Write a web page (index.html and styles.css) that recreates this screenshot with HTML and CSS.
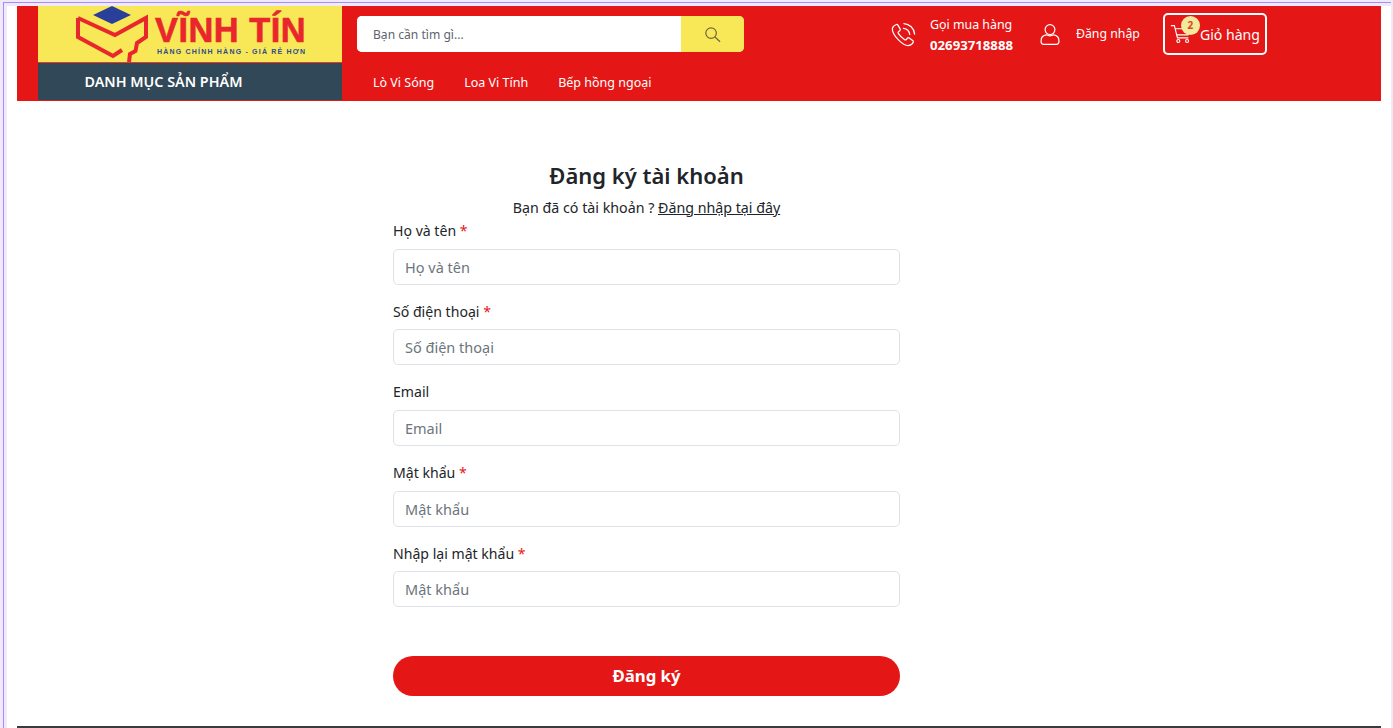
FILE: index.html
```html
<!DOCTYPE html>
<html lang="vi">
<head>
<meta charset="utf-8">
<title>Đăng ký tài khoản</title>
<link rel="stylesheet" href="styles.css">
</head>
<body>
<div class="window">
<div class="frame">
<div class="page">
  <header class="header">
    <div class="brand">
      <a class="logo" href="#">
        <svg class="logo-mark" viewBox="0 0 74 58" aria-hidden="true">
          <polygon class="logo-diamond" points="17,9 36,0 55,9 36,18"/>
          <polyline class="logo-stroke" points="2,12 39,29 70,12 70,31 61,37 59.5,45 54,48 53,56"/>
          <polyline class="logo-stroke" points="2,12 2,31 37,50 46,44"/>
        </svg>
        <span class="logo-text">
          <span class="logo-name">VĨNH TÍN</span>
          <span class="logo-tag">HÀNG CHÍNH HÀNG - GIÁ RẺ HƠN</span>
        </span>
      </a>
      <div class="catalog">DANH MỤC SẢN PHẨM</div>
    </div>
    <div class="bar">
      <div class="bar-top">
        <form class="search">
          <input class="search-input" type="text" placeholder="Bạn cần tìm gì...">
          <button class="search-btn" type="button" aria-label="Tìm kiếm">
            <svg viewBox="0 0 18 18" class="search-icon"><circle cx="7.5" cy="7.5" r="5.6"/><path d="M11.6 11.6 L17 16.6"/></svg>
          </button>
        </form>
        <div class="actions">
          <div class="hotline">
            <svg class="phone-icon" viewBox="0 0 26 26" aria-hidden="true">
              <path d="M5.6 2.6 C3.6 3.4 1.6 5 1.4 7 C1.2 10.2 4.6 15.4 8 18.8 C11.4 22.2 15.6 24.8 18.6 24.4 C20.6 24.1 22.6 22.4 23.2 20.8 C23.4 20.2 23.2 19.8 22.8 19.4 L19 16.6 C18.4 16.2 17.8 16.2 17.3 16.7 L15.7 18.4 C15.2 18.8 14.8 18.8 14.2 18.4 C11.8 16.8 9.2 14.2 7.6 11.8 C7.2 11.2 7.2 10.8 7.7 10.3 L9.3 8.8 C9.8 8.3 9.8 7.7 9.5 7.1 L7 3 C6.7 2.5 6.2 2.3 5.6 2.6 Z"/>
              <path d="M13 6.6 C16.4 7 19 9.6 19.5 13"/>
              <path d="M13.4 1.6 C19.4 2 24 6.6 24.6 12.6"/>
            </svg>
            <div class="hotline-text">
              <span class="hotline-label">Gọi mua hàng</span>
              <strong class="hotline-num">02693718888</strong>
            </div>
          </div>
          <a class="login" href="#">
            <svg class="user-icon" viewBox="0 0 22 24" aria-hidden="true">
              <circle cx="11" cy="6.6" r="5.4"/>
              <path d="M7 12.4 C3.4 13 1.2 15.4 1.2 18.6 V20 C1.2 21.6 2.4 22.8 4 22.8 H18 C19.6 22.8 20.8 21.6 20.8 20 V18.6 C20.8 15.4 18.6 13 15 12.4 C12.6 13.8 9.4 13.8 7 12.4 Z"/>
            </svg>
            <span>Đăng nhập</span>
          </a>
          <a class="cart" href="#">
            <svg class="cart-icon" viewBox="0 0 24 22" aria-hidden="true">
              <path d="M1 1.5 H5 L8.5 15.5 H21"/>
              <path d="M5.8 5 H22.6 L20.6 12 H7.5"/>
              <circle cx="9.5" cy="19" r="1.7"/>
              <circle cx="19.5" cy="19" r="1.7"/>
            </svg>
            <span>Giỏ hàng</span>
            <span class="cart-badge">2</span>
          </a>
        </div>
      </div>
      <nav class="nav">
        <a href="#">Lò Vi Sóng</a>
        <a href="#">Loa Vi Tính</a>
        <a href="#">Bếp hồng ngoại</a>
      </nav>
    </div>
  </header>
  <main class="main">
    <section class="register">
      <h1 class="title">Đăng ký tài khoản</h1>
      <p class="subtitle">Bạn đã có tài khoản ? <a href="#">Đăng nhập tại đây</a></p>
      <form class="form">
        <div class="field">
          <label>Họ và tên <span class="req">*</span></label>
          <input type="text" placeholder="Họ và tên">
        </div>
        <div class="field">
          <label>Số điện thoại <span class="req">*</span></label>
          <input type="text" placeholder="Số điện thoại">
        </div>
        <div class="field">
          <label>Email</label>
          <input type="text" placeholder="Email">
        </div>
        <div class="field">
          <label>Mật khẩu <span class="req">*</span></label>
          <input type="password" placeholder="Mật khẩu">
        </div>
        <div class="field">
          <label>Nhập lại mật khẩu <span class="req">*</span></label>
          <input type="password" placeholder="Mật khẩu">
        </div>
        <button class="submit" type="button">Đăng ký</button>
      </form>
    </section>
  </main>
  <footer class="footer"></footer>
</div>
</div>
</div>
</body>
</html>
```

FILE: styles.css
```css
* { box-sizing: border-box; }
html, body { margin: 0; height: 728px; overflow: hidden; }
body { background: #efe9fb; font-family: "Noto Sans", "Open Sans", sans-serif; color: #212529; }
a { color: inherit; text-decoration: none; }

.window { height: 728px; padding: 2px 2px 0 3px; }
.frame { height: 726px; border-top: 1px solid #a98bf5; border-left: 1px solid #a98bf5; padding: 3px 0 0 3px; }
.page { height: 722px; background: #fff; padding: 0 10px; display: flex; flex-direction: column; }

.header { height: 94.5px; background: #e51616; display: flex; padding-left: 21px; flex: none; }
.brand { width: 304px; flex: none; display: flex; flex-direction: column; }
.logo { height: 57px; background: #f8e858; border-bottom: 1px solid #ea3a20; display: flex; padding: 0 0 0 38px; gap: 5px; overflow: hidden; }
.logo-mark { width: 74px; height: 58px; flex: none; }
.logo-diamond { fill: #2a3f9a; }
.logo-stroke { fill: none; stroke: #e8262b; stroke-width: 4; }
.logo-text { display: flex; flex-direction: column; padding-top: 8px; width: 152px; }
.logo-name { font-family: "Liberation Sans", sans-serif; font-weight: 700; font-size: 34.4px; line-height: 33px; color: #e8262b; white-space: nowrap; letter-spacing: 0.5px; -webkit-text-stroke: 0.6px #e8262b; }
.logo-tag { font-family: "Liberation Sans", sans-serif; font-weight: 700; font-size: 7px; line-height: 9px; color: #2e4a90; letter-spacing: 1.2px; white-space: nowrap; margin-left: 2px; }
.catalog { height: 37px; background: #304858; color: #fff; font-size: 14.35px; font-weight: 600; line-height: 37px; padding-left: 46.5px; white-space: nowrap; }

.bar { flex: 1; padding-left: 15px; display: flex; flex-direction: column; }
.bar-top { height: 57px; display: flex; padding-top: 10px; }
.search { width: 387px; height: 36px; display: flex; border-radius: 5px; overflow: hidden; background: #fff; flex: none; }
.search-input { flex: 1; min-width: 0; border: 0; outline: 0; padding: 0 15px 0 16px; font: 12.1px "Noto Sans", sans-serif; background: #fff; }
.search-input::placeholder { color: #5d6670; opacity: 1; }
.search-btn { width: 63px; border: 0; padding: 0; background: #f8e858; display: flex; align-items: center; justify-content: center; }
.search-icon { width: 17px; height: 17px; fill: none; stroke: #6f6a3a; stroke-width: 1.3; }

.actions { display: flex; color: #fff; margin-left: 147px; margin-top: -3px; align-items: flex-start; height: 42px; }
.hotline { display: flex; align-items: center; height: 42px; gap: 14px; }
.phone-icon { width: 25px; height: 25px; fill: none; stroke: #fff; stroke-width: 1.3; stroke-linecap: round; flex: none; margin-top: 1px; }
.hotline-text { display: flex; flex-direction: column; font-size: 12.4px; line-height: 21px; padding-top: 2px; }
.hotline-label { white-space: nowrap; }
.hotline-num { font-weight: 700; font-size: 13.2px; white-space: nowrap; }
.login { display: flex; align-items: center; height: 42px; gap: 16px; font-size: 12.3px; margin-left: 27px; white-space: nowrap; }
.login span { margin-bottom: 2px; }
.user-icon { width: 20px; height: 23px; fill: none; stroke: #fff; stroke-width: 1.3; flex: none; }
.cart { position: relative; display: flex; align-items: center; width: 104px; height: 42px; margin-left: 23px; border: 2px solid #fff; border-radius: 5px; padding-left: 5px; gap: 9px; font-size: 14.1px; white-space: nowrap; }
.cart-icon { width: 21px; height: 20px; fill: none; stroke: #fff; stroke-width: 1.3; flex: none; }
.cart-badge { position: absolute; left: 16px; top: 1px; width: 19px; height: 19px; border-radius: 50%; background: #f0ea9a; color: #e8402b; font-size: 10px; font-weight: 700; line-height: 19px; text-align: center; }

.nav { display: flex; gap: 30px; color: #fff; font-size: 12.5px; line-height: 18px; padding: 11px 0 0 16px; }

.main { flex: 1; padding-left: 376px; }
.register { width: 507px; padding-top: 56px; }
.title { margin: 0; text-align: center; font-size: 22px; font-weight: 600; line-height: 36px; }
.subtitle { margin: 5px 0 0; text-align: center; font-size: 14.24px; line-height: 20px; }
.subtitle a { text-decoration: underline; }
.form { display: flex; flex-direction: column; }
.field { display: flex; flex-direction: column; height: 80.7px; padding-top: 3.5px; }
.field label { font-size: 14.1px; line-height: 20px; height: 27.5px; }
.req { color: #e61717; }
.field input { height: 36px; flex: none; border: 1px solid #dee2e6; border-radius: 5px; padding: 0 11px; font: 14.5px "Noto Sans", sans-serif; outline: 0; background: #fff; width: 100%; }
.field input::placeholder { color: #6c757d; opacity: 1; }
.submit { margin-top: 35px; height: 40px; border: 0; border-radius: 20px; background: #e51616; color: #fff; font: 700 16.8px "Noto Sans", sans-serif; width: 507px; }

.footer { height: 2px; background: #3a3a3f; flex: none; }
```
